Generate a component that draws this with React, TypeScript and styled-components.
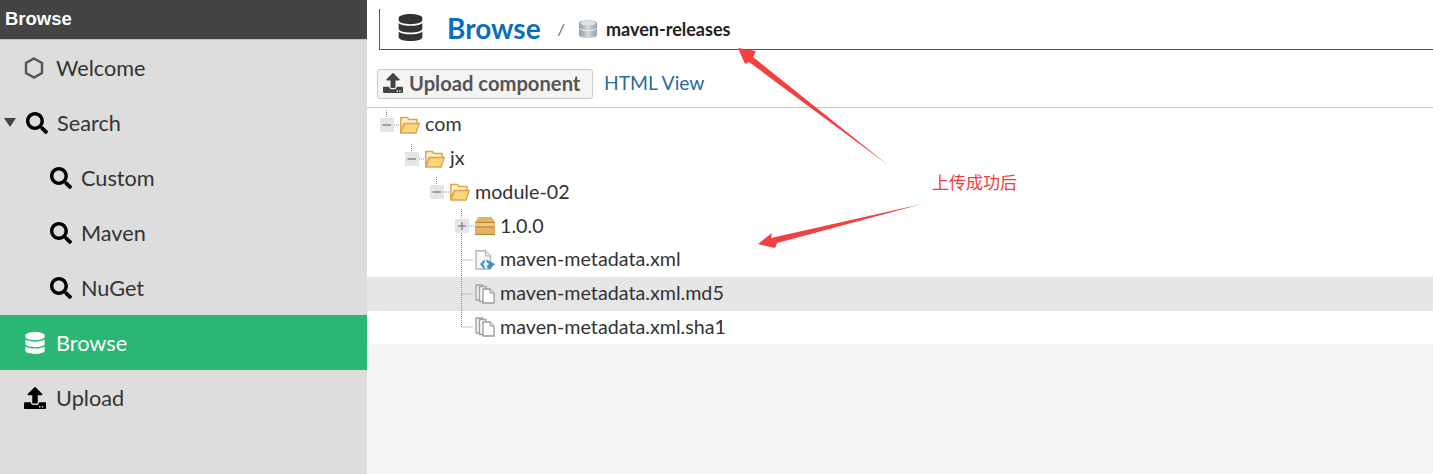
import React from "react";
import styled, { createGlobalStyle } from "styled-components";
import { FaDatabase, FaSearch, FaUpload } from "react-icons/fa";

const GlobalStyle = createGlobalStyle`
  html, body {
    margin: 0;
    padding: 0;
    background: #fff;
  }
  * {
    box-sizing: border-box;
  }
`;

const Page = styled.div`
  position: relative;
  display: flex;
  width: 1433px;
  height: 474px;
  overflow: hidden;
  font-family: Lato, "Noto Sans CJK SC", sans-serif;
  color: #333;
`;

const Sidebar = styled.nav`
  width: 367px;
  flex-shrink: 0;
  background: #dddddd;
`;

const SidebarTitle = styled.div`
  height: 40px;
  padding: 0 5px 2px;
  display: flex;
  align-items: center;
  background: #444444;
  border-bottom: 1px solid #bdbdbd;
  color: #fff;
  font-family: "Liberation Sans", sans-serif;
  font-size: 18.5px;
  font-weight: 700;
`;

const NavItem = styled.div<{ $indent: number; $active?: boolean }>`
  height: 55px;
  padding-left: ${(props) => props.$indent}px;
  display: flex;
  align-items: center;
  background: ${(props) => (props.$active ? "#2ab673" : "transparent")};
  color: ${(props) => (props.$active ? "#fff" : "#333")};
  font-size: 21.7px;
`;

const Caret = styled.span`
  width: 0;
  height: 0;
  margin-right: 10px;
  border-left: 6px solid transparent;
  border-right: 6px solid transparent;
  border-top: 9px solid #444;
`;

const NavIcon = styled.span<{ $color?: string; $slot: number }>`
  width: ${(props) => props.$slot}px;
  flex-shrink: 0;
  display: flex;
  align-items: center;
  color: ${(props) => props.$color || "#000"};
  font-size: 22px;
`;

const Main = styled.main`
  flex: 1;
  display: flex;
  flex-direction: column;
  background: #f4f4f4;
`;

const TopArea = styled.div`
  background: #fff;
  padding: 9px 0 0 12px;
`;

const Breadcrumb = styled.header`
  height: 41px;
  padding-left: 17px;
  display: flex;
  align-items: center;
  border-left: 1px solid #555;
  border-bottom: 1px solid #555;
`;

const BreadcrumbIcon = styled.span`
  width: 50px;
  margin-bottom: 3px;
  display: flex;
  color: #333;
  font-size: 27px;
`;

const PageTitle = styled.h1`
  margin: 0 0 3px;
  width: 111px;
  color: #0a6ebd;
  font-size: 28px;
  font-weight: 700;
`;

const Slash = styled.span`
  width: 20px;
  color: #555;
  font-size: 15px;
  font-style: italic;
`;

const RepoName = styled.span`
  margin-left: 8px;
  font-size: 18px;
  font-weight: 700;
  color: #222;
`;

const Toolbar = styled.div`
  height: 57px;
  margin-left: -2px;
  padding-top: 19px;
  display: flex;
  align-items: flex-start;
  gap: 11px;
`;

const Rule = styled.div`
  height: 1px;
  margin-left: -12px;
  background: #c8c8c8;
`;

const UploadButton = styled.button`
  width: 216px;
  height: 30px;
  padding: 0 0 3px 5px;
  display: flex;
  align-items: center;
  gap: 6px;
  background: #f4f4f4;
  border: 1px solid #cccccc;
  border-radius: 3px;
  color: #555;
  font-family: inherit;
  font-size: 20.2px;
  font-weight: 700;
  white-space: nowrap;
`;

const TextLink = styled.a`
  line-height: 27px;
  color: #2a6a9e;
  font-size: 19.3px;
`;

const Tree = styled.ul`
  margin: 0;
  padding: 0;
  list-style: none;
  background: #fff;
`;

const TreeRow = styled.li<{ $level: number; $selected?: boolean }>`
  height: 33.75px;
  padding-left: ${(props) => 13 + props.$level * 25}px;
  display: flex;
  align-items: center;
  background: ${(props) => (props.$selected ? "#e6e6e6" : "transparent")};
  font-size: 19.7px;
`;

const TreeLabel = styled.span`
  margin: 0 0 2px 5px;
  white-space: nowrap;
`;

const Annotation = styled.span`
  position: absolute;
  left: 932px;
  top: 173px;
  color: #f33b3b;
  font-size: 17px;
  line-height: 20px;
  white-space: nowrap;
`;

const ArrowLayer = styled.svg`
  position: absolute;
  left: 0;
  top: 0;
  pointer-events: none;
`;

const Hexagon = () => (
  <svg width="22" height="22" viewBox="0 0 22 22" style={{ marginLeft: -1 }}>
    <path d="M11 1.5 19 6v10l-8 4.5L3 16V6z" fill="none" stroke="#555" strokeWidth="2.4" />
  </svg>
);

const RepoCylinder = () => (
  <svg width="20" height="20" viewBox="0 0 20 20">
    <defs>
      <linearGradient id="cyl" x1="0" x2="1" y1="0" y2="0">
        <stop offset="0" stopColor="#8f9ba3" />
        <stop offset="0.5" stopColor="#d3d8dc" />
        <stop offset="1" stopColor="#98a3aa" />
      </linearGradient>
    </defs>
    <path d="M1 4c0-4 18-4 18 0v12c0 4-18 4-18 0z" fill="url(#cyl)" />
    <ellipse cx="10" cy="4.2" rx="7.5" ry="2.6" fill="#dfe3e6" />
    <path d="M1 9c2 3.4 16 3.4 18 0" fill="none" stroke="#f0f2f3" strokeWidth="1" />
  </svg>
);

type ConnectorKind = "root" | "branch" | "leaf" | "last";

const Connector = ({ kind, plus }: { kind: ConnectorKind; plus?: boolean }) => {
  const dots = { stroke: "#8d8d8d", strokeWidth: 1, strokeDasharray: "1 1", fill: "none" };
  const hasBox = kind === "root" || kind === "branch";
  return (
    <svg width="20" height="34" viewBox="0 0 20 34" style={{ flexShrink: 0 }}>
      {kind === "root" && <path d="M6.5 2V10" {...dots} />}
      {kind === "branch" && <path d="M6.5 0V34" {...dots} />}
      {kind === "leaf" && <path d="M6.5 0V34M6.5 17H18" {...dots} />}
      {kind === "last" && <path d="M6.5 0V17H18" {...dots} />}
      {hasBox && (
        <>
          <path d="M14 17H19" {...dots} />
          <rect x="0" y="10" width="14" height="14" fill="#e3e5ea" />
          <path d={plus ? "M3 17H11M7 13V21" : "M2.5 17H11"} stroke="#6f6f6f" strokeWidth="1.2" />
        </>
      )}
    </svg>
  );
};

const FolderOpen = () => (
  <svg width="20" height="20" viewBox="0 0 20 20" style={{ flexShrink: 0 }}>
    <path d="M.8 18V2.5h6.5l1.7 2H17V9H4L.8 18z" fill="#fff0c4" stroke="#dca550" strokeWidth="1.5" />
    <path d="M.8 18 4.5 8.5h14.7L16 18z" fill="#fbd67a" stroke="#dca550" strokeWidth="1.5" />
  </svg>
);

const PackageBox = () => (
  <svg width="20" height="20" viewBox="0 0 20 20" style={{ flexShrink: 0 }}>
    <path d="M0 6 3.5 1h13L20 6v13H0z" fill="#e2b266" />
    <path d="M0 6h20v4H0z" fill="#efc682" />
    <path d="M0 6.5H20M0 11H20" stroke="#b98636" strokeWidth="1.2" />
    <path d="M0 18.5H20" stroke="#b98636" strokeWidth="1.2" />
  </svg>
);

const XmlFile = () => (
  <svg width="20" height="20" viewBox="0 0 20 20" style={{ flexShrink: 0 }}>
    <path d="M1 .8h9.5L15.5 6V19H1z" fill="#f7f7f7" stroke="#b5b5b5" strokeWidth="1.4" />
    <path d="M10.5 .8V6h5" fill="#e6e6e6" stroke="#b5b5b5" />
    <path d="M10 9.5 5 14l4.5 5.5V16.5L8 14l2-2zM11.5 9.5l8.5 4.5-5.5 5.5-3-3 2.5-2.5-2.5-2z" fill="#3a8fd1" />
  </svg>
);

const CopiesFile = () => (
  <svg width="20" height="20" viewBox="0 0 20 20" style={{ flexShrink: 0 }}>
    <path d="M1 1h6.5v15H1z" fill="#eeeeee" stroke="#a2a2a2" strokeWidth="1.3" />
    <path d="M4.5 2.5h6.5v15H4.5z" fill="#f5f5f5" stroke="#a2a2a2" strokeWidth="1.3" />
    <path d="M8 5h7l4 4v10H8z" fill="#fff" stroke="#9a9a9a" strokeWidth="1.3" />
    <path d="M15 5v4h4" fill="#e6e6e6" stroke="#9a9a9a" />
  </svg>
);

const navItems = [
  { label: "Welcome", indent: 24, slot: 32, icon: <Hexagon /> },
  { label: "Search", indent: 4, slot: 31, icon: <FaSearch />, caret: true },
  { label: "Custom", indent: 50, slot: 31, icon: <FaSearch /> },
  { label: "Maven", indent: 50, slot: 31, icon: <FaSearch /> },
  { label: "NuGet", indent: 50, slot: 31, icon: <FaSearch /> },
  { label: "Browse", indent: 24, slot: 32, icon: <FaDatabase />, active: true },
  { label: "Upload", indent: 24, slot: 32, icon: <FaUpload /> },
];

const treeRows = [
  { label: "com", level: 0, kind: "root", icon: <FolderOpen /> },
  { label: "jx", level: 1, kind: "root", icon: <FolderOpen /> },
  { label: "module-02", level: 2, kind: "root", icon: <FolderOpen /> },
  { label: "1.0.0", level: 3, kind: "branch", icon: <PackageBox />, plus: true },
  { label: "maven-metadata.xml", level: 3, kind: "leaf", icon: <XmlFile /> },
  { label: "maven-metadata.xml.md5", level: 3, kind: "leaf", icon: <CopiesFile />, selected: true },
  { label: "maven-metadata.xml.sha1", level: 3, kind: "last", icon: <CopiesFile /> },
] as const;

export default function App() {
  return (
    <>
      <GlobalStyle />
      <Page>
        <Sidebar>
          <SidebarTitle>Browse</SidebarTitle>
          {navItems.map((item) => (
            <NavItem key={item.label} $indent={item.indent} $active={item.active}>
              {item.caret && <Caret />}
              <NavIcon $slot={item.slot} $color={item.active ? "#fff" : "#000"}>
                {item.icon}
              </NavIcon>
              {item.label}
            </NavItem>
          ))}
        </Sidebar>
        <Main>
          <TopArea>
            <Breadcrumb>
              <BreadcrumbIcon>
                <FaDatabase />
              </BreadcrumbIcon>
              <PageTitle>Browse</PageTitle>
              <Slash>/</Slash>
              <RepoCylinder />
              <RepoName>maven-releases</RepoName>
            </Breadcrumb>
            <Toolbar>
              <UploadButton>
                <FaUpload color="#444" size={20} />
                Upload component
              </UploadButton>
              <TextLink>HTML View</TextLink>
            </Toolbar>
            <Rule />
          </TopArea>
          <Tree>
            {treeRows.map((row) => (
              <TreeRow
                key={row.label}
                $level={row.level}
                $selected={"selected" in row ? row.selected : false}
              >
                <Connector kind={row.kind} plus={"plus" in row ? row.plus : false} />
                {row.icon}
                <TreeLabel>{row.label}</TreeLabel>
              </TreeRow>
            ))}
          </Tree>
        </Main>
        <ArrowLayer width="1433" height="474" viewBox="0 0 1433 474">
          <path d="M738 48 756 51 753 57 888 165 749 62 745 64z" fill="#f43f3f" />
          <path d="M758 244 772 233 771 238 922 204 777 243 775 248z" fill="#f43f3f" />
        </ArrowLayer>
        <Annotation>上传成功后</Annotation>
      </Page>
    </>
  );
}
